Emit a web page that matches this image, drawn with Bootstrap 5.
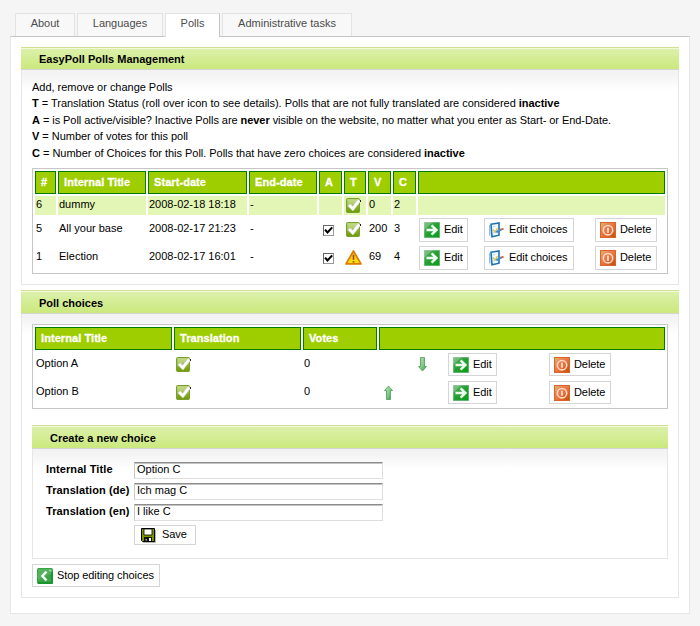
<!DOCTYPE html>
<html lang="en">
<head>
<meta charset="utf-8">
<meta name="viewport" content="width=device-width, initial-scale=1">
<title>EasyPoll Polls Management</title>
<link href="https://cdn.jsdelivr.net/npm/bootstrap@5.3.0/dist/css/bootstrap.min.css" rel="stylesheet">
<style>
body{background:#f5f5f5;color:#000;font:11px/16.5px "Liberation Sans",Arial,Helvetica,sans-serif;width:700px;height:626px;overflow:hidden}
.page-tabs{padding:13px 0 0 15px;gap:2px;border:0}
.page-tabs .nav-link{height:24px;padding:0;line-height:19px;text-align:center;border:1px solid #e3e3e3;border-bottom:0;border-radius:0;background:#f8f8f8;color:#4c4c4c;margin:0}
.page-tabs .nav-link.active{background:#fff;color:#4c4c4c;border-color:#e3e3e3 #c6c6c6 #fff #e3e3e3}
.page-tabs .nav-item{height:23px}
.page-tabs .nav-link:not(.active){height:23px}
.page-tabs .nav-link.active{position:relative;z-index:1}
.t-about{width:60px}.t-lang{width:86px}.t-polls{width:55px}.t-admin{width:130px}
.main-panel{width:680px;height:578px;margin-left:10px;background:#fff;border:1px solid #e6e6e6;border-top-color:#c6c6c6;padding:10px}
.sect-head{height:24px;border-top:1px solid #cfdf94;border-bottom:1px solid #d4d4d4;background:linear-gradient(#f3fadc 0 1px,#dcf0aa 1px,#cbe97d 100%);padding:1px 0 0 18px;font-weight:700;line-height:23px;font-size:11px}
.sect-body{border:1px solid #e6e6e6;border-top:0;background:linear-gradient(#f2f2f2 0,#f4f4f4 6px,#fff 20px)}
.sect-1 .sect-head{height:23px;padding-top:0}
.sect-1 .sect-body{height:215px;padding:8.75px 10px 0}
.sect-2 .sect-body{height:284px;padding:10px 10px 0}
.sect-2{margin-top:5px}
.sect-3{margin-top:16px}
.sect-3 .sect-body{height:110px;padding:13px 13px 0}
.intro{letter-spacing:-.025px;margin-bottom:6.75px}
.intro .tight{letter-spacing:-.057px}
.grid{border:1px solid #c6c6c6;background:#fff;border-collapse:separate;border-spacing:2px;table-layout:fixed;width:636px;line-height:14px}
.grid th{height:23px;background:#9fce00;border:1px solid #007c00;color:#fff;padding:0 0 1px 5px;vertical-align:middle;line-height:19px;letter-spacing:.07px;-webkit-text-stroke:.3px #fff}
.grid td{padding:4px 1px 1px;vertical-align:top;height:26px;white-space:nowrap}
.grid td.tools{padding-top:1px}
.grid tr.hl td{height:19px;background:#e3f6b5;padding-top:1px}
.grid .ic{display:block;margin:1px 0 0 1px}
.actbtn{display:inline-flex;align-items:flex-start;border:1px solid #d5d5d5;background:#fff;border-radius:0;padding:0 0 0 4px;font-size:11px;line-height:20px;letter-spacing:-.08px;color:#000;height:24px;gap:4px;white-space:nowrap;text-align:left}
.actbtn svg{flex:none;margin-top:3px}
.grid-2 .actbtn,.actbtn.stop{height:23px}
.actbtn.stop{margin-top:5px}
.w-edit{width:49px}.w-choice{width:90px}.w-del{width:62px}.w-stop{width:128px}
.actbtn.w-save{display:flex;width:62px;height:20px;margin-left:88px;padding-left:6px;gap:6px;line-height:17px}
.actbtn.w-save svg{margin-top:2px}
.far{margin-left:21px}
.slot-up,.slot-down{width:34px;padding-left:4px}
.gap-l{margin-left:52px}
.tickbox{display:block;width:11px;height:11px;margin:4px 0 0 3px;border:1px solid #666;border-right-color:#999;border-bottom-color:#999;background:#fff}
.field-row{height:21px}
.field-row label{width:88px;font-weight:700;line-height:15px;white-space:nowrap;letter-spacing:.1px}
.field-row input{width:249px;height:17px;border:1px solid #dedede;border-top:1px solid #8c8c8c;border-left-color:#c8c8c8;box-shadow:inset 0 1px #c4c4c4;padding:0 2px 3px;border-radius:0;font-size:11px;line-height:12px;color:#000;background:#fff}
</style>
</head>
<body>
<svg width="0" height="0" class="position-absolute">
<defs>
<linearGradient id="gOk" x1="0" y1="0" x2="0" y2="1"><stop offset="0" stop-color="#b4d16c"/><stop offset=".5" stop-color="#8db533"/><stop offset="1" stop-color="#6f9a06"/></linearGradient>
<linearGradient id="gGo" x1="0" y1="0" x2="1" y2="1"><stop offset="0" stop-color="#5fae66"/><stop offset=".5" stop-color="#23a032"/><stop offset="1" stop-color="#05a016"/></linearGradient>
<linearGradient id="gDel" x1="0" y1="0" x2="1" y2="1"><stop offset="0" stop-color="#f29a6c"/><stop offset=".5" stop-color="#ee7440"/><stop offset="1" stop-color="#c04e00"/></linearGradient>
<linearGradient id="gArr" x1="0" y1="0" x2="1" y2="1"><stop offset="0" stop-color="#b5e3b5"/><stop offset=".6" stop-color="#7cc682"/><stop offset="1" stop-color="#2a7d32"/></linearGradient>
<linearGradient id="gWarn" x1="0" y1="0" x2="0" y2="1"><stop offset="0" stop-color="#ffb52b"/><stop offset="1" stop-color="#ffe600"/></linearGradient>
<symbol id="i-ok" viewBox="0 0 16 15"><rect x=".5" y=".5" width="13" height="14" rx="1" fill="url(#gOk)" stroke="#7a9f2c"/><path d="M1.5 1.5h11v4q-5 0-11 3z" fill="#fff" opacity=".25"/><path d="M1.8 8 4.4 6l2.2 2.3L12 1.6l2.6 1.5L7 13z" fill="#fff" stroke="#d5d9d0" stroke-width=".6"/><path d="M14.5 2v2" stroke="#222"/></symbol>
<symbol id="i-warn" viewBox="0 0 17 15"><path d="M8.5 1 16 13.9H1z" fill="url(#gWarn)" stroke="#dd7a00" stroke-width="1.7" stroke-linejoin="round"/><path d="M8.5 4.8v5" stroke="#9a4a00" stroke-width="1.6"/><rect x="7.7" y="11" width="1.6" height="1.6" fill="#9a4a00"/></symbol>
<symbol id="i-go" viewBox="0 0 16 16"><rect x=".5" y=".5" width="15" height="15" fill="url(#gGo)" stroke="#4b9e55" stroke-opacity=".6"/><path d="M0 0h9L0 8z" fill="#fff" opacity=".22"/><path d="M2.5 8h10M7.6 3.4 12.4 8l-4.8 4.6" fill="none" stroke="#eefaef" stroke-width="2.5"/></symbol>
<symbol id="i-back" viewBox="0 0 16 16"><rect width="16" height="16" rx="1.5" fill="#39a544"/><path d="M1 1h14v4L1 12z" fill="#fff" opacity=".14"/><path d="M1 15h14V4" fill="none" stroke="#11902a" stroke-width="1.4"/><path d="M9.5 3.6 5.4 8l4.1 4.4" fill="none" stroke="#fff" stroke-width="2.3"/><path d="M12 2l2 1" stroke="#c4f0c4"/></symbol>
<symbol id="i-del" viewBox="0 0 16 16"><rect x=".5" y=".5" width="15" height="15" fill="url(#gDel)" stroke="#d8662c"/><path d="M1 1h5L1 6z" fill="#d9b060" opacity=".7"/><circle cx="8" cy="8.2" r="4.7" fill="none" stroke="#ffdccb" stroke-width="1.6"/><path d="M8 5.7v5" stroke="#ffe9de" stroke-width="1.7"/></symbol>
<symbol id="i-note" viewBox="0 0 16 16"><path d="M2 2.2 10 1v12.2l-7 1.6z" fill="#f5faff" stroke="#1d74b5" stroke-width="1.6"/><path d="M.8 3v10.5" stroke="#5aa7dc" stroke-width="1"/><path d="M3.4 5l3-.4M3.4 11l4-.6" stroke="#b8d4ea"/><path d="M4 7.5 6 10l2.5-4" stroke="#d9c24a" fill="none" stroke-width="1.3"/><path d="M7.3 10.2l5-2.8" stroke="#3f8fd0" stroke-width="2.2"/><path d="M12 7.6l2.6-1" stroke="#e0603a" stroke-width="1.8"/></symbol>
<symbol id="i-down" viewBox="0 0 9 15"><path d="M2.5.5h4v9h2L4.5 14 .5 9.5h2z" fill="url(#gArr)" stroke="#5aa465" stroke-width=".9"/></symbol>
<symbol id="i-up" viewBox="0 0 9 15"><path d="M2.5 14.5h4v-9h2L4.5 1 .5 5.5h2z" fill="url(#gArr)" stroke="#5aa465" stroke-width=".9"/></symbol>
<symbol id="i-save" viewBox="0 0 15 15"><path d="M2 2h13v13H2z" fill="#b5b5b5"/><path d="M.5.5h13v13h-12l-1-1z" fill="#779600" stroke="#000"/><path d="M3 1h8v6H3z" fill="#fff" stroke="#000" stroke-width=".8"/><path d="M3 9h8v4.5H3z" fill="#111"/><path d="M8 10h2v3H8z" fill="#fff"/><path d="M4.5 11h1.5v1.5H4.5z" fill="#aaa"/></symbol>
<symbol id="i-tick" viewBox="0 0 11 11"><path d="M2 4.6 4.5 7.4 9.2 2.4" fill="none" stroke="#000" stroke-width="2.1"/></symbol>
</defs>
</svg>

<ul class="nav nav-tabs page-tabs">
  <li class="nav-item"><a class="nav-link t-about" href="#">About</a></li>
  <li class="nav-item"><a class="nav-link t-lang" href="#">Languages</a></li>
  <li class="nav-item"><a class="nav-link active t-polls" href="#">Polls</a></li>
  <li class="nav-item"><a class="nav-link t-admin" href="#">Administrative tasks</a></li>
</ul>
<main class="main-panel">
  <section class="sect-1">
    <h2 class="sect-head mb-0">EasyPoll Polls Management</h2>
    <div class="sect-body">
      <div class="intro text-nowrap">
        <div>Add, remove or change Polls</div>
        <div><b>T</b> = Translation Status (roll over icon to see details). Polls that are not fully translated are considered <b>inactive</b></div>
        <div class="tight"><b>A</b> = is Poll active/visible? Inactive Polls are <b>never</b> visible on the website, no matter what you enter as Start- or End-Date.</div>
        <div><b>V</b> = Number of votes for this poll</div>
        <div><b>C</b> = Number of Choices for this Poll. Polls that have zero choices are considered <b>inactive</b></div>
      </div>
      <table class="grid grid-1">
        <colgroup><col style="width:21px"><col style="width:88px"><col style="width:99px"><col style="width:68px"><col style="width:23px"><col style="width:22px"><col style="width:23px"><col style="width:23px"><col></colgroup>
        <thead><tr><th>#</th><th>Internal Title</th><th>Start-date</th><th>End-date</th><th>A</th><th>T</th><th>V</th><th>C</th><th></th></tr></thead>
        <tbody>
          <tr class="hl"><td>6</td><td>dummy</td><td>2008-02-18 18:18</td><td>-</td><td></td><td><svg class="ic" width="16" height="15"><use href="#i-ok"/></svg></td><td>0</td><td>2</td><td></td></tr>
          <tr><td>5</td><td>All your base</td><td>2008-02-17 21:23</td><td>-</td><td><svg class="tickbox" viewBox="1 1 9 9"><use href="#i-tick" width="11" height="11"/></svg></td><td><svg class="ic" width="16" height="15"><use href="#i-ok"/></svg></td><td>200</td><td>3</td>
            <td class="tools"><div class="d-flex"><button class="actbtn w-edit"><svg width="16" height="16"><use href="#i-go"/></svg>Edit</button><button class="actbtn w-choice ms-3"><svg width="16" height="16"><use href="#i-note"/></svg>Edit choices</button><button class="actbtn w-del far"><svg width="16" height="16"><use href="#i-del"/></svg>Delete</button></div></td></tr>
          <tr><td>1</td><td>Election</td><td>2008-02-17 16:01</td><td>-</td><td><svg class="tickbox" viewBox="1 1 9 9"><use href="#i-tick" width="11" height="11"/></svg></td><td><svg class="ic ms-0" width="17" height="15"><use href="#i-warn"/></svg></td><td>69</td><td>4</td>
            <td class="tools"><div class="d-flex"><button class="actbtn w-edit"><svg width="16" height="16"><use href="#i-go"/></svg>Edit</button><button class="actbtn w-choice ms-3"><svg width="16" height="16"><use href="#i-note"/></svg>Edit choices</button><button class="actbtn w-del far"><svg width="16" height="16"><use href="#i-del"/></svg>Delete</button></div></td></tr>
        </tbody>
      </table>
    </div>
  </section>
  <section class="sect-2">
    <h2 class="sect-head mb-0">Poll choices</h2>
    <div class="sect-body">
      <table class="grid grid-2">
        <colgroup><col style="width:137px"><col style="width:127px"><col style="width:74px"><col></colgroup>
        <thead><tr><th>Internal Title</th><th>Translation</th><th>Votes</th><th></th></tr></thead>
        <tbody>
          <tr><td>Option A</td><td><svg class="ic" width="16" height="15"><use href="#i-ok"/></svg></td><td>0</td><td class="tools"><div class="d-flex align-items-center"><span class="slot-up"></span><span class="slot-down"><svg width="9" height="15" class="d-block"><use href="#i-down"/></svg></span><button class="actbtn w-edit"><svg width="16" height="16"><use href="#i-go"/></svg>Edit</button><button class="actbtn w-del gap-l"><svg width="16" height="16"><use href="#i-del"/></svg>Delete</button></div></td></tr>
          <tr><td>Option B</td><td><svg class="ic" width="16" height="15"><use href="#i-ok"/></svg></td><td>0</td><td class="tools"><div class="d-flex align-items-center"><span class="slot-up"><svg width="9" height="15" class="d-block"><use href="#i-up"/></svg></span><span class="slot-down"></span><button class="actbtn w-edit"><svg width="16" height="16"><use href="#i-go"/></svg>Edit</button><button class="actbtn w-del gap-l"><svg width="16" height="16"><use href="#i-del"/></svg>Delete</button></div></td></tr>
        </tbody>
      </table>
      <div class="sect-3">
        <h3 class="sect-head mb-0">Create a new choice</h3>
        <form class="sect-body">
          <div class="field-row d-flex"><label for="f1">Internal Title</label><input id="f1" value="Option C"></div>
          <div class="field-row d-flex"><label for="f2">Translation (de)</label><input id="f2" value="Ich mag C"></div>
          <div class="field-row d-flex"><label for="f3">Translation (en)</label><input id="f3" value="I like C"></div>
          <button type="button" class="actbtn w-save"><svg width="15" height="15"><use href="#i-save"/></svg>Save</button>
        </form>
      </div>
      <button class="actbtn stop w-stop"><svg width="16" height="16"><use href="#i-back"/></svg>Stop editing choices</button>
    </div>
  </section>
</main>
<script src="https://cdn.jsdelivr.net/npm/bootstrap@5.3.0/dist/js/bootstrap.bundle.min.js"></script>
</body>
</html>
